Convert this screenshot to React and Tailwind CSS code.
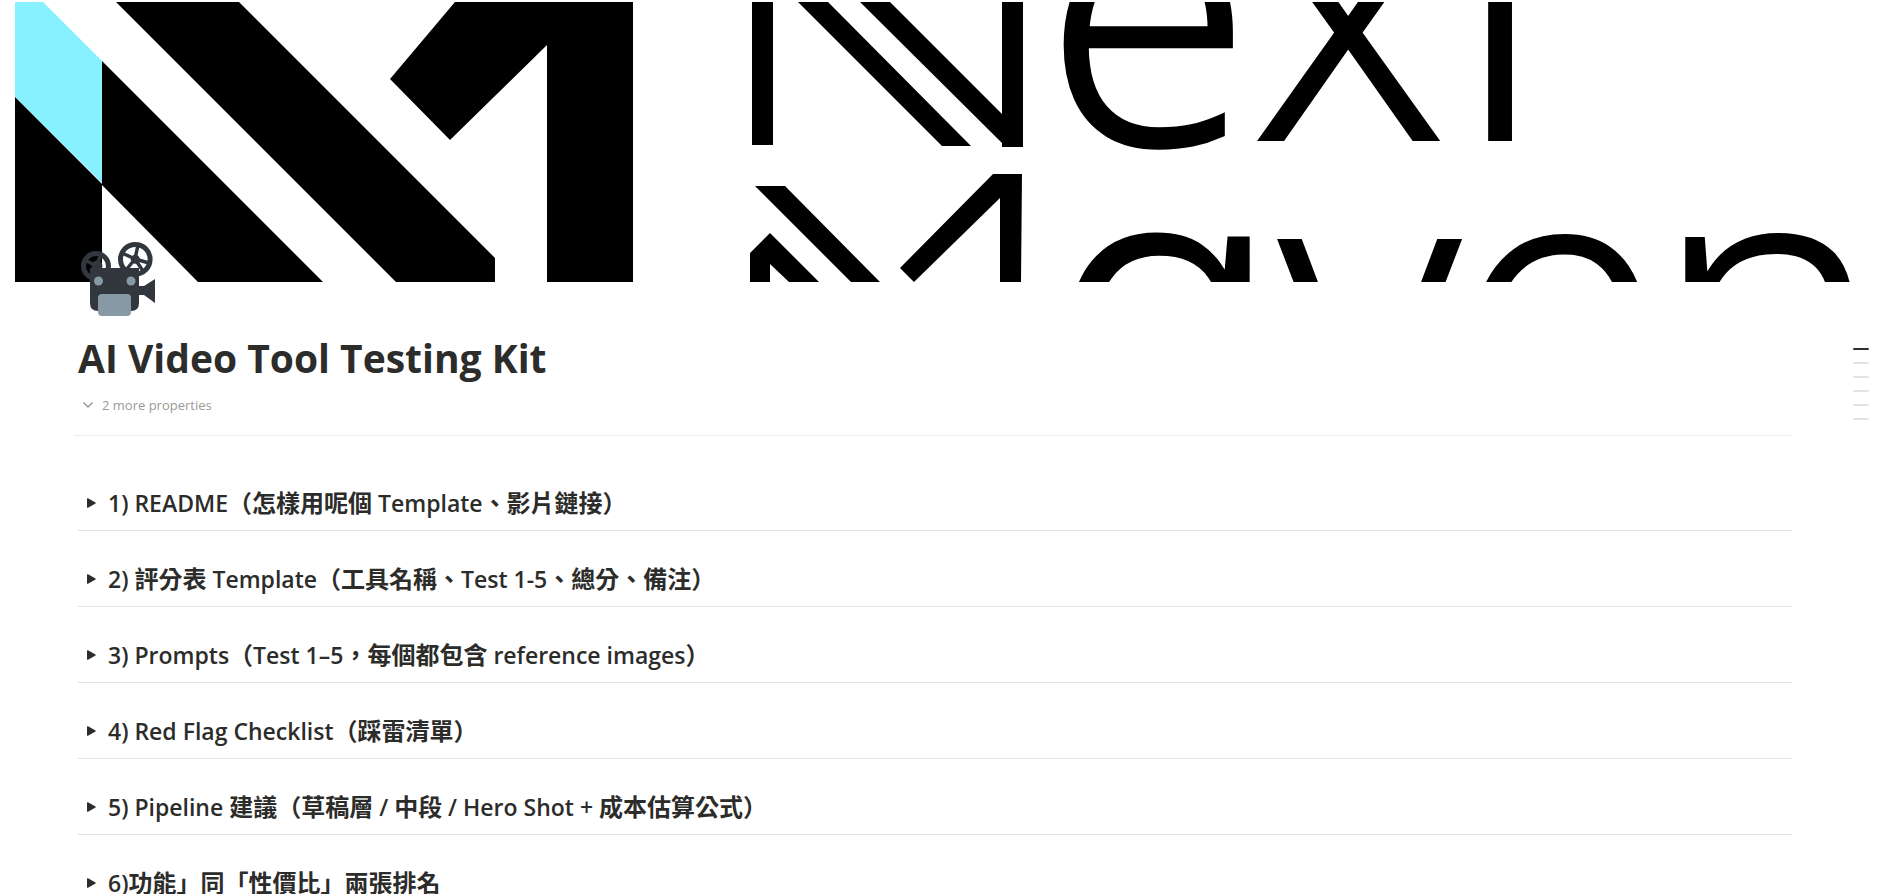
import React, { useState } from "react";

const sections = [
  "1) README（怎樣用呢個 Template、影片鏈接）",
  "2) 評分表 Template（工具名稱、Test 1-5、總分、備注）",
  "3) Prompts（Test 1–5，每個都包含 reference images）",
  "4) Red Flag Checklist（踩雷清單）",
  "5) Pipeline 建議（草稿層 / 中段 / Hero Shot + 成本估算公式）",
  "6)功能」同「性價比」兩張排名",
];

const Cover = () => (
  <svg
    className="block w-full h-[280px]"
    viewBox="0 2 1888 280"
    preserveAspectRatio="xMidYMid slice"
    role="img"
    aria-label="Next Maven"
  >
    {/* NM mark */}
    <path d="M15 2H43L102 61V183L15 97Z" fill="#88f1ff" />
    <path d="M102 61L323 282H198L102 185Z" />
    <path d="M15 97L102 184V282H15Z" />
    <path d="M116 2H239L495 258V282H396Z" />
    <path d="M455 2H633V282H547V45L450 140L390 79Z" />

    {/* double-stroke initials */}
    <path d="M752 2H773V145H752Z" />
    <path d="M798 2H828L971 146H942Z" />
    <path d="M860 2H890L1002 114V2H1023V147H1002V143Z" />
    <path d="M755 186H785L880 282H851Z" />
    <path d="M750 253L770 233L819 282H789L770 264V282H750Z" />
    <path d="M900 268L993 174H1022L1021 282H1000V198L914 282Z" />

    <g
      fontWeight="300"
      fontSize="390"
      stroke="#000"
      strokeWidth="4"
      className="font-['Open_Sans',sans-serif]"
    >
      <text x="1045" y="143" fontSize="376" strokeWidth="6">e</text>
      <text x="1252" y="139">x</text>
      <text x="1398" y="139">T</text>
      <text x="1048" y="446" className="font-['Roboto','Noto_Sans',sans-serif]">ɑ</text>
      <text x="1280" y="448">v</text>
      <text x="1452" y="447">e</text>
      <text x="1653" y="446">n</text>
    </g>
  </svg>
);

const Projector = () => (
  <svg className="block size-[78px]" viewBox="78 238 78 78" fill="#31373d">
    <g fill="none" stroke="#31373d">
      <circle cx="96" cy="266" r="12.500" strokeWidth="5" />
      <circle cx="135.300" cy="259.300" r="14.800" strokeWidth="5" />
      <path
        strokeWidth="3.500"
        d="M135 259L138 245M135 259L149 263M135 259L143 271M135 259L126 270M135 259L122 253M96 266L101 255M96 266L85 260M96 266L90 277"
      />
    </g>
    <circle cx="135.300" cy="259.300" r="4.500" />
    <circle cx="97" cy="266" r="5.500" />
    <path d="M90 268H139V286H144L155 279V303L144 295H139V303Q139 311 131 311H98Q90 311 90 303Z" />
    <g fill="#8899a6">
      <circle cx="98.500" cy="281" r="4.500" />
      <circle cx="131" cy="281" r="4.500" />
      <rect x="98" y="294" width="33" height="22" rx="4" />
    </g>
  </svg>
);

// Latin runs are set a touch smaller than the Chinese ones
const MixedText = ({ text }) =>
  text.split(/([\u3000-\uffff]+)/).map((run, i) =>
    i % 2 ? (
      <span key={i}>{run}</span>
    ) : (
      <span key={i} className="text-[23px]">{run}</span>
    )
  );

const ToggleHeading = ({ title }) => {
  const [open, setOpen] = useState(false);

  return (
    <section className="h-19 border-b border-[#e3e3e2] flex items-end pb-[9px]">
      <h2 className="text-2xl leading-9 font-semibold">
        <button
          aria-expanded={open}
          onClick={() => setOpen(!open)}
          className="flex items-center text-left"
        >
          <span className="w-[30px] flex pl-[9px]">
            <svg viewBox="0 0 9 10" className={open ? "w-[9px] h-2.5 rotate-90" : "w-[9px] h-2.5"}>
              <path d="M0 0.800Q0 0 1 0.300L8.500 4.400Q9 5 8.500 5.600L1 9.700Q0 10 0 9.200Z" fill="currentColor" />
            </svg>
          </span>
          <span className="whitespace-pre-wrap">
            <MixedText text={title} />
          </span>
        </button>
      </h2>
    </section>
  );
};

const App = () => {
  const [active, setActive] = useState(0);

  return (
    <div className="h-screen overflow-hidden bg-white text-[#2c2c2b] font-['Open_Sans','Noto_Sans_CJK_TC',sans-serif] pt-0.5">
      <Cover />

      <main className="relative pl-[78px] pr-24">
        <div className="-mt-11 relative">
          <Projector />
        </div>

        <h1 className="mt-[18px] text-[39px] leading-12 font-bold">AI Video Tool Testing Kit</h1>

        <button className="mt-[13px] ml-1 flex items-center gap-2 text-[13px] leading-5 text-[#9b9a97]">
          <svg viewBox="0 0 12 12" className="w-3 h-3" fill="none" stroke="currentColor" strokeWidth="1.500">
            <path d="M1.500 3.500L6 8L10.500 3.500" />
          </svg>
          2 more properties
        </button>

        <div className="mt-5 -ml-1 -mr-px border-t border-[#ebebea]" />

        <div className="mt-[19px]">
          {sections.map((title) => (
            <ToggleHeading key={title} title={title} />
          ))}
        </div>

        <nav className="absolute right-[19px] top-26 flex flex-col" aria-label="Contents">
          {sections.map((title, i) => (
            <button
              key={title}
              aria-label={title}
              onClick={() => setActive(i)}
              className="h-3.5 flex items-center"
            >
              <span
                className={
                  i === active
                    ? "w-4 h-0.5 rounded-xs bg-[#32302c]"
                    : "w-4 h-0.5 rounded-xs bg-[#e3e3e2]"
                }
              />
            </button>
          ))}
        </nav>
      </main>
    </div>
  );
};

export default App;
